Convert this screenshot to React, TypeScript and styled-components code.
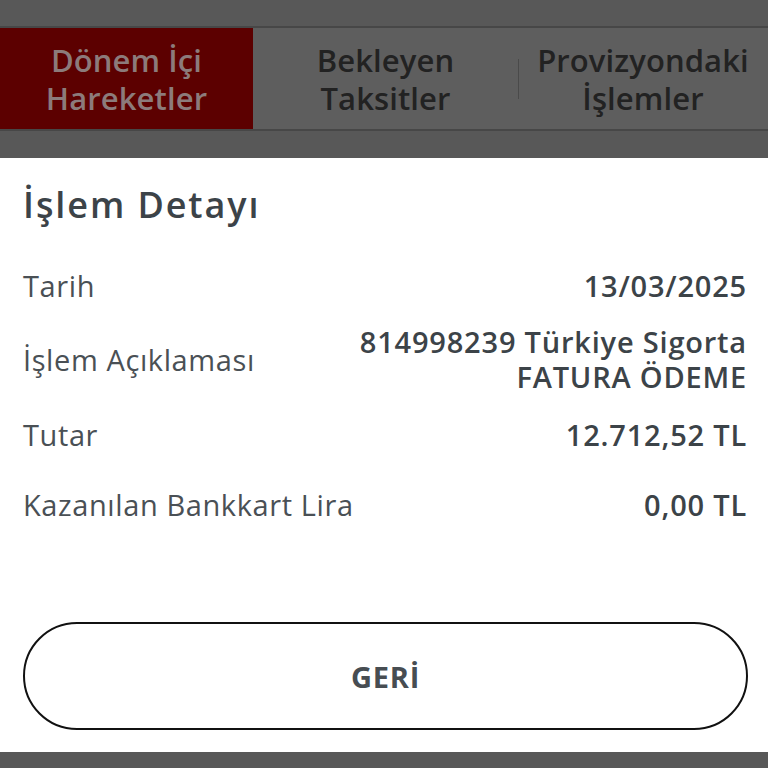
import React from "react";
import styled, { createGlobalStyle } from "styled-components";

const GlobalStyle = createGlobalStyle`
  html, body {
    margin: 0;
    padding: 0;
    background: #585858;
  }
  body {
    font-family: "Open Sans", "Noto Sans", sans-serif;
  }
  * {
    box-sizing: border-box;
  }
`;

const Screen = styled.div`
  width: 768px;
  height: 768px;
  display: flex;
  flex-direction: column;
  overflow: hidden;
  background: #585858;
`;

const TopStrip = styled.div`
  height: 26px;
  background: #585858;
`;

const TabBar = styled.div`
  height: 105px;
  display: flex;
  align-items: stretch;
  background: #5e5e5e;
  border-top: 2px solid #474747;
  border-bottom: 2px solid #474747;
`;

const Tab = styled.div<{ $active?: boolean; $width: number; $divider?: boolean }>`
  width: ${(p) => p.$width}px;
  display: flex;
  align-items: center;
  justify-content: center;
  text-align: center;
  font-size: 31px;
  line-height: 38px;
  font-weight: 600;
  letter-spacing: 0.1px;
  color: ${(p) => (p.$active ? "#8c7b7b" : "#222222")};
  background: ${(p) => (p.$active ? "#5c0000" : "transparent")};
  position: relative;
  &::before {
    content: "";
    display: ${(p) => (p.$divider ? "block" : "none")};
    position: absolute;
    left: 0;
    top: 31px;
    height: 40px;
    width: 1px;
    background: #4a4a4a;
  }
`;

const GapStrip = styled.div`
  height: 27px;
  background: #585858;
`;

const Sheet = styled.div`
  flex: 1;
  background: #ffffff;
  padding: 22px 21px 0 23px;
  display: flex;
  flex-direction: column;
`;

const Title = styled.h1`
  margin: 0;
  font-size: 36px;
  font-weight: 600;
  color: #3c4348;
  line-height: 50px;
  letter-spacing: 1.9px;
`;

const Rows = styled.div`
  margin-top: 20px;
  display: flex;
  flex-direction: column;
`;

const Row = styled.div<{ $height: number }>`
  height: ${(p) => p.$height}px;
  display: flex;
  align-items: center;
  justify-content: space-between;
`;

const Label = styled.span`
  font-size: 29px;
  font-weight: 400;
  color: #4a5055;
  letter-spacing: 0.6px;
`;

const Value = styled.div`
  display: flex;
  flex-direction: column;
  align-items: flex-end;
  font-size: 29px;
  font-weight: 600;
  color: #3c4348;
  letter-spacing: 0.8px;
`;

const ValueLine = styled.span`
  line-height: 35px;
`;

const BackButton = styled.button`
  margin-top: 84px;
  height: 108px;
  width: 725px;
  border: 2px solid #111111;
  border-radius: 54px;
  background: #ffffff;
  font-family: inherit;
  font-size: 29px;
  font-weight: 700;
  color: #474d52;
  letter-spacing: 0.8px;
`;

const BottomStrip = styled.div`
  height: 16px;
  background: #585858;
`;

const rows = [
  { label: "Tarih", value: ["13/03/2025"], h: 70 },
  { label: "İşlem Açıklaması", value: ["814998239 Türkiye Sigorta", "FATURA ÖDEME"], h: 78 },
  { label: "Tutar", value: ["12.712,52 TL"], h: 72 },
  { label: "Kazanılan Bankkart Lira", value: ["0,00 TL"], h: 68 },
];

export default function App() {
  return (
    <Screen>
      <GlobalStyle />
      <TopStrip />
      <TabBar>
        <Tab $active $width={253}>
          Dönem İçi
          <br />
          Hareketler
        </Tab>
        <Tab $width={265}>
          Bekleyen
          <br />
          Taksitler
        </Tab>
        <Tab $width={250} $divider>
          Provizyondaki
          <br />
          İşlemler
        </Tab>
      </TabBar>
      <GapStrip />
      <Sheet>
        <Title>İşlem Detayı</Title>
        <Rows>
          {rows.map((r) => (
            <Row key={r.label} $height={r.h}>
              <Label>{r.label}</Label>
              <Value>
                {r.value.map((line) => (
                  <ValueLine key={line}>{line}</ValueLine>
                ))}
              </Value>
            </Row>
          ))}
        </Rows>
        <BackButton>GERİ</BackButton>
      </Sheet>
      <BottomStrip />
    </Screen>
  );
}
